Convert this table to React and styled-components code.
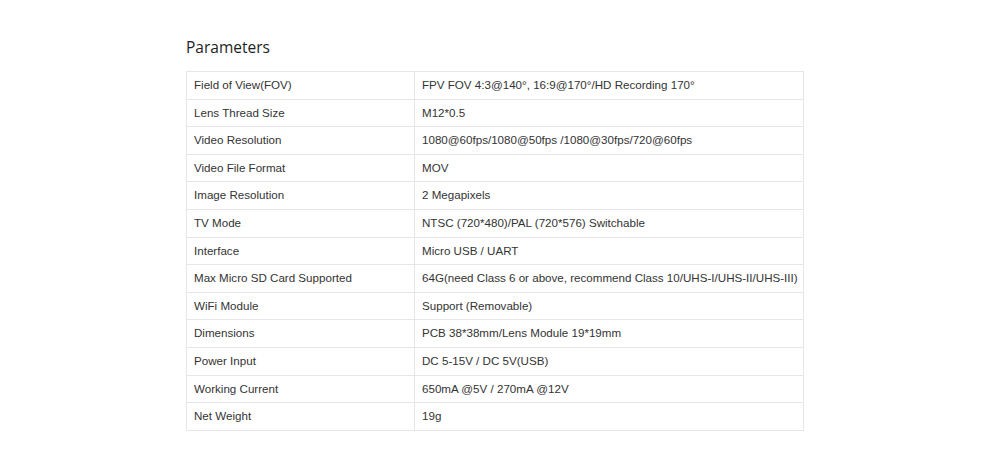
import React from 'react';
import styled, { createGlobalStyle } from 'styled-components';

const GlobalStyle = createGlobalStyle`
  body {
    margin: 0;
    background: #fff;
  }
`;

const Page = styled.div`
  padding: 35px 0 0 186px;
  width: 618px;
`;

const Title = styled.h2`
  margin: 0 0 12px;
  font-family: "Open Sans", "Noto Sans", sans-serif;
  font-size: 15.5px;
  font-weight: 400;
  line-height: 24px;
  color: #1e1e1e;
`;

const Table = styled.table`
  width: 618px;
  border-collapse: collapse;
  table-layout: fixed;
  font-family: "Liberation Sans", Arial, sans-serif;
  font-size: 11.6px;
  color: #333;
`;

const Cell = styled.td`
  box-sizing: border-box;
  width: ${props => props.width || 'auto'};
  border: 1px solid #e6e6e6;
  padding: 5px 7px;
  line-height: 16.6px;
  vertical-align: middle;
  white-space: nowrap;
`;

const specs = [
  ['Field of View(FOV)', 'FPV FOV 4:3@140°, 16:9@170°/HD Recording 170°'],
  ['Lens Thread Size', 'M12*0.5'],
  ['Video Resolution', '1080@60fps/1080@50fps /1080@30fps/720@60fps'],
  ['Video File Format', 'MOV'],
  ['Image Resolution', '2 Megapixels'],
  ['TV Mode', 'NTSC (720*480)/PAL (720*576) Switchable'],
  ['Interface', 'Micro USB / UART'],
  ['Max Micro SD Card Supported', '64G(need Class 6 or above, recommend Class 10/UHS-I/UHS-II/UHS-III)'],
  ['WiFi Module', 'Support (Removable)'],
  ['Dimensions', 'PCB 38*38mm/Lens Module 19*19mm'],
  ['Power Input', 'DC 5-15V / DC 5V(USB)'],
  ['Working Current', '650mA @5V / 270mA @12V'],
  ['Net Weight', '19g'],
];

export default function App() {
  return (
    <>
      <GlobalStyle />
      <Page>
        <Title>Parameters</Title>
        <Table>
          <tbody>
            {specs.map(([name, value]) => (
              <tr key={name}>
                <Cell width="228px">{name}</Cell>
                <Cell>{value}</Cell>
              </tr>
            ))}
          </tbody>
        </Table>
      </Page>
    </>
  );
}
